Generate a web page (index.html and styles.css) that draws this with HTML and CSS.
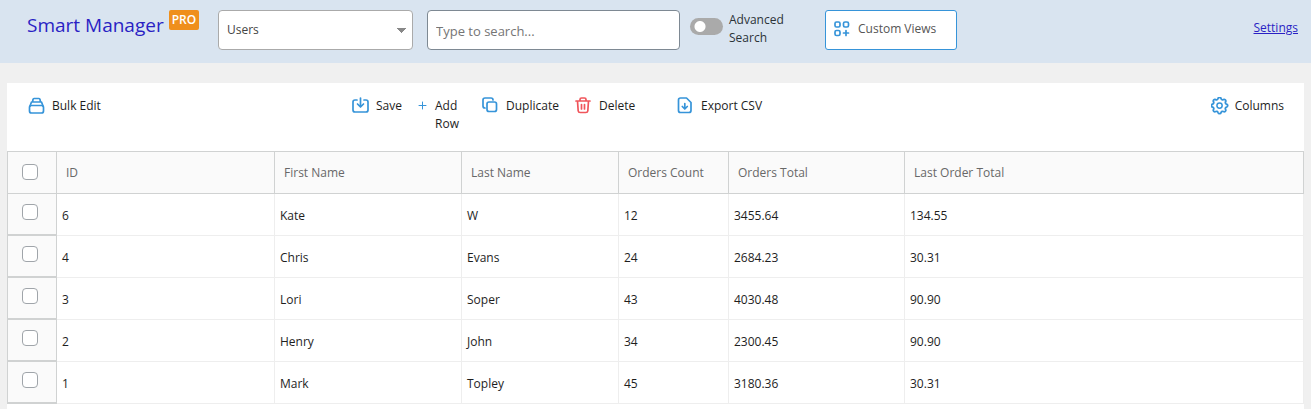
FILE: index.html
```html
<!DOCTYPE html>
<html lang="en">
<head>
    <title>Smart Manager</title>
    <meta charset="UTF-8">
    <link rel="stylesheet" href="styles.css">
</head>
<body>
    <header class="top-bar">
        <h1 class="brand">Smart Manager <span class="badge">PRO</span></h1>
        <select class="dashboard-select" aria-label="Dashboard">
            <option>Users</option>
        </select>
        <input class="search" type="text" placeholder="Type to search..." aria-label="Search">
        <label class="advanced">
            <input class="switch" type="checkbox">
            <span>Advanced Search</span>
        </label>
        <button class="views" type="button">
            <svg width="16" height="16" viewBox="0 0 16 16">
                <rect x="1" y="1" width="5" height="5" rx="1.500"/>
                <rect x="9.500" y="1" width="5" height="5" rx="1.500"/>
                <rect x="1" y="9.500" width="5" height="5" rx="1.500"/>
                <path d="M12 9.500v5M9.500 12h5"/>
            </svg>
            Custom Views
        </button>
        <a class="settings" href="#">Settings</a>
    </header>

    <main class="panel">
        <div class="toolbar">
            <button class="tool tool-bulk" type="button">
                <svg width="18" height="18" viewBox="0 0 18 18">
                    <rect x="1.500" y="8.500" width="14" height="7.500" rx="2"/>
                    <path d="M2 9l1.500-4h10L15 9M4.500 5l.5-2.500Q5.200 1.500 6 1.500h5q.8 0 1 1l.5 2.500"/>
                </svg>
                <span>Bulk Edit</span>
            </button>
            <button class="tool tool-save" type="button">
                <svg width="18" height="18" viewBox="0 0 18 18">
                    <path d="M5 3H3Q1 3 1 5v8q0 2 2 2h11q2 0 2-2V5q0-2-2-2h-2M8.500 1v8.500M5.500 7l3 3 3-3"/>
                </svg>
                <span>Save</span>
            </button>
            <button class="tool tool-add" type="button">
                <svg width="9" height="18" viewBox="0 0 9 18">
                    <path class="thin" d="M4.500 5v7M1 8.500h7"/>
                </svg>
                <span>Add Row</span>
            </button>
            <button class="tool tool-duplicate" type="button">
                <svg width="18" height="18" viewBox="0 0 18 18">
                    <rect x="5" y="5" width="9.500" height="9.500" rx="2"/>
                    <path d="M3 11Q1 11 1 9V3q0-2 2-2h6q2 0 2 2"/>
                </svg>
                <span>Duplicate</span>
            </button>
            <button class="tool tool-delete" type="button">
                <svg width="18" height="18" viewBox="0 0 18 18">
                    <path d="M1 4h14M5 4V2.500Q5 1 6.500 1h3Q11 1 11 2.500V4M2.500 4l.7 10q.2 1.500 2 1.500h5.600q1.800 0 2-1.500l.7-10"/>
                    <path d="M6.500 7.500v4.500M9.500 7.500v4.500"/>
                </svg>
                <span>Delete</span>
            </button>
            <button class="tool tool-export" type="button">
                <svg width="18" height="18" viewBox="0 0 18 18">
                    <path d="M9.500 1H3.500q-2 0-2 2v10.500q0 2 2 2h8.500q2 0 2-2v-8zM7.800 6.500v5M5.300 9.500l2.500 2.500 2.500-2.500"/>
                </svg>
                <span>Export CSV</span>
            </button>
            <button class="tool tool-columns" type="button">
                <svg width="18" height="18" viewBox="0 0 24 24">
                    <path class="gear" d="M10.300 4.300c.4-1.800 2.900-1.800 3.400 0a1.700 1.700 0 0 0 2.600 1.100c1.500-.9 3.300.8 2.400 2.400a1.700 1.700 0 0 0 1 2.500c1.800.4 1.800 2.900 0 3.400a1.700 1.700 0 0 0-1 2.600c.9 1.500-.9 3.300-2.400 2.400a1.700 1.700 0 0 0-2.600 1c-.4 1.800-2.900 1.800-3.400 0a1.700 1.700 0 0 0-2.600-1c-1.500.9-3.300-.9-2.400-2.400a1.700 1.700 0 0 0-1-2.600c-1.800-.4-1.800-2.900 0-3.400a1.700 1.700 0 0 0 1-2.500c-.9-1.600.9-3.300 2.400-2.400 1 .6 2.300.1 2.600-1.100z" transform="translate(-3 -3) scale(1.200)"/>
                    <circle class="gear" cx="11.400" cy="11.400" r="3.500"/>
                </svg>
                <span>Columns</span>
            </button>
        </div>

        <table class="grid">
            <colgroup>
                <col class="col-check">
                <col class="col-id">
                <col class="col-first">
                <col class="col-last">
                <col class="col-count">
                <col class="col-total">
                <col>
            </colgroup>
            <thead>
                <tr>
                    <th><input type="checkbox" aria-label="Select all"></th>
                    <th>ID</th>
                    <th>First Name</th>
                    <th>Last Name</th>
                    <th>Orders Count</th>
                    <th>Orders Total</th>
                    <th>Last Order Total</th>
                </tr>
            </thead>
            <tbody>
                <tr>
                    <td><input type="checkbox" aria-label="Select user 6"></td>
                    <td>6</td><td>Kate</td><td>W</td><td>12</td><td>3455.64</td><td>134.55</td>
                </tr>
                <tr>
                    <td><input type="checkbox" aria-label="Select user 4"></td>
                    <td>4</td><td>Chris</td><td>Evans</td><td>24</td><td>2684.23</td><td>30.31</td>
                </tr>
                <tr>
                    <td><input type="checkbox" aria-label="Select user 3"></td>
                    <td>3</td><td>Lori</td><td>Soper</td><td>43</td><td>4030.48</td><td>90.90</td>
                </tr>
                <tr>
                    <td><input type="checkbox" aria-label="Select user 2"></td>
                    <td>2</td><td>Henry</td><td>John</td><td>34</td><td>2300.45</td><td>90.90</td>
                </tr>
                <tr>
                    <td><input type="checkbox" aria-label="Select user 1"></td>
                    <td>1</td><td>Mark</td><td>Topley</td><td>45</td><td>3180.36</td><td>30.31</td>
                </tr>
            </tbody>
        </table>
    </main>
</body>
</html>
```
FILE: styles.css
```css
* {
    box-sizing: border-box;
}
html {
    height: 100%;
}
body {
    margin: 0;
    min-height: 100%;
    display: flex;
    flex-direction: column;
    background-color: #f0f0f0;
    color: #1e1e1e;
    font-family: 'Segoe UI', 'Open Sans', sans-serif;
    font-size: 12px;
    line-height: 18px;
}
button, input, select {
    font: inherit;
    color: inherit;
}
svg {
    flex: none;
    fill: none;
    stroke: #3694d9;
    stroke-width: 1.7;
    stroke-linecap: round;
    stroke-linejoin: round;
}

/* top bar */
.top-bar {
    display: flex;
    align-items: flex-start;
    padding: 10px 13px 13px 27px;
    background-color: #d9e4f0;
}
.brand {
    display: flex;
    gap: 5px;
    width: 191px;
    margin: 0;
    color: #2a1fc4;
    font-size: 19px;
    font-weight: 500;
    line-height: 30px;
    white-space: nowrap;
}
.badge {
    height: 20px;
    padding: 0 3px;
    border-radius: 2px;
    background-color: #ef8f1c;
    color: white;
    font-size: 12px;
    font-weight: 600;
    line-height: 20px;
}
.dashboard-select {
    appearance: none;
    width: 195px;
    height: 40px;
    margin-right: 14px;
    padding: 0 8px;
    border: 1px solid #aaa;
    border-radius: 4px;
    background-color: white;
    background-image: conic-gradient(from -42deg at 50% 100%, #888 84deg, transparent 0);
    background-position: right 6px center;
    background-repeat: no-repeat;
    background-size: 9px 5px;
    color: #444;
}
.search {
    width: 253px;
    height: 40px;
    margin-right: 10px;
    padding: 2px 8px 0;
    border: 1px solid #7e8993;
    border-radius: 4px;
    background-color: white;
    font-size: 13px;
}
.search::placeholder {
    color: #757575;
}
.advanced {
    display: flex;
    gap: 6px;
    width: 135px;
    color: #2c3338;
}
.advanced span {
    width: 70px;
    padding-top: 1px;
}
.switch {
    appearance: none;
    flex: none;
    width: 33px;
    height: 17px;
    margin: 8px 0 0;
    border-radius: 9px;
    background: radial-gradient(circle at 10px 50%, white 5px, #aaa 6px);
}
.views {
    display: flex;
    align-items: center;
    gap: 8px;
    width: 132px;
    height: 40px;
    padding: 0 8px 2px;
    border: 1px solid #3694d9;
    border-radius: 3px;
    background-color: white;
    color: #555;
    white-space: nowrap;
}
.settings {
    margin: 9px 0 0 auto;
    color: #2a1fc4;
}

/* panel */
.panel {
    flex: 1;
    margin: 20px 7px 0;
    background-color: white;
}
.toolbar {
    display: flex;
    align-items: flex-start;
    height: 68px;
    padding: 14px 20px 0 21px;
}
.tool {
    display: flex;
    align-items: flex-start;
    gap: 6px;
    padding: 0;
    border: none;
    background: none;
    text-align: left;
}
.tool-bulk {
    width: 324px;
}
.tool-save {
    width: 66px;
}
.tool-add {
    gap: 8px;
    width: 64px;
}
.tool-add span {
    width: 30px;
}
.tool-duplicate {
    width: 93px;
}
.tool-delete {
    width: 102px;
}
.tool-delete svg {
    stroke: #f0555b;
}
.tool-columns {
    margin-left: auto;
}
.thin {
    stroke-width: 1;
}
.gear {
    stroke-width: 2;
}

/* data grid */
.grid {
    width: 100%;
    table-layout: fixed;
    border-collapse: separate;
    border-spacing: 0;
    border-left: 1px solid #d0d2d2;
}
.col-check {
    width: 49px;
}
.col-id {
    width: 218px;
}
.col-first {
    width: 187px;
}
.col-last {
    width: 157px;
}
.col-count {
    width: 110px;
}
.col-total {
    width: 176px;
}
th, td {
    height: 42px;
    padding: 2px 5px 0;
    border-right: 1px solid #eee;
    border-bottom: 1px solid #eee;
    text-align: left;
}
th {
    height: 43px;
    padding: 0 9px;
    border-color: #d0d2d2;
    border-top: 1px solid #d0d2d2;
    background-color: #fafafa;
    color: #686868;
    font-weight: 400;
}
th:first-child, td:first-child {
    padding: 0 14px 2px;
    border-color: #d0d2d2;
    background-color: #fafafa;
}
td:first-child {
    padding-bottom: 4px;
    border-bottom-width: 2px;
}
.grid input {
    appearance: none;
    display: block;
    width: 16px;
    height: 16px;
    margin: 0;
    border: 1px solid #a0a5aa;
    border-radius: 4px;
    background-color: white;
}
```
